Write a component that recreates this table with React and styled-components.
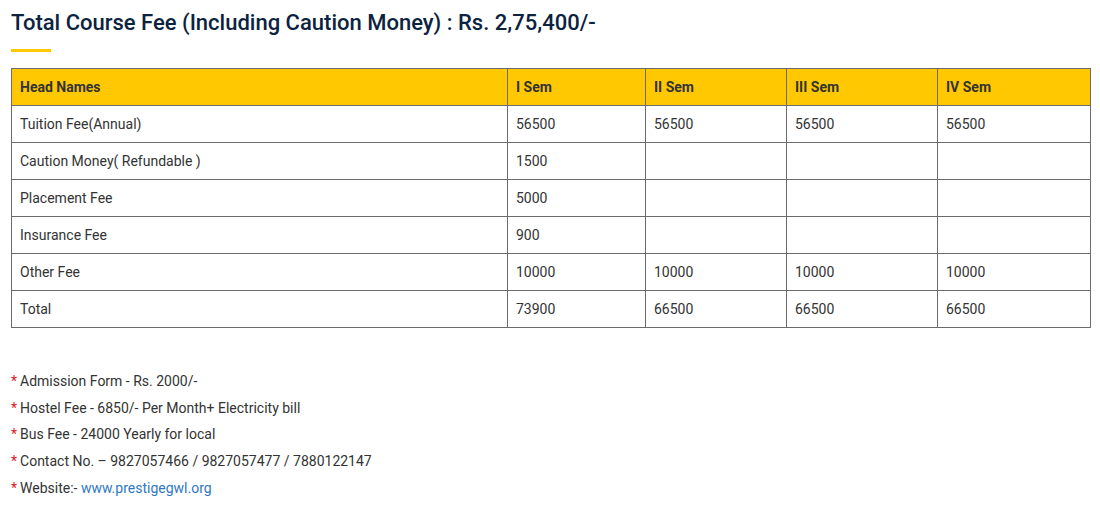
import React from "react";
import styled, { createGlobalStyle } from "styled-components";

const GlobalStyle = createGlobalStyle`
  body {
    margin: 0;
    background: #fff;
    font-family: Roboto, "Liberation Sans", sans-serif;
  }
`;

const Page = styled.div`
  padding: 8px 10px 0 11px;
`;

const Title = styled.h2`
  margin: 0;
  font-size: 22px;
  font-weight: 500;
  line-height: 30px;
  color: #0c2340;
`;

const Bar = styled.div`
  width: 40px;
  height: 3px;
  background: #ffc800;
  margin: 11px 0 16px;
`;

const Table = styled.table`
  width: 1080px;
  border-collapse: collapse;
  font-size: 14px;
  color: #333;
  table-layout: fixed;
`;

const Th = styled.th`
  box-sizing: border-box;
  background: #ffc800;
  border: 1px solid #6b6b6b;
  text-align: left;
  font-weight: 700;
  height: 37px;
  padding: 0 8px;
  width: ${props => props.w}px;
`;

const Td = styled.td`
  border: 1px solid #6b6b6b;
  height: 36px;
  padding: 0 8px;
`;

const Notes = styled.ul`
  list-style: none;
  margin: 40px 0 0;
  padding: 0;
  font-size: 14px;
  color: #333;
`;

const Note = styled.li`
  line-height: 26.7px;
  &::before {
    content: "*";
    color: #e0151b;
    margin-right: 3px;
  }
`;

const Site = styled.a`
  color: #2f78c4;
  text-decoration: none;
`;

const heads = [
  ["Head Names", 496],
  ["I Sem", 138],
  ["II Sem", 141],
  ["III Sem", 151],
  ["IV Sem", 153],
];

const rows = [
  ["Tuition Fee(Annual)", "56500", "56500", "56500", "56500"],
  ["Caution Money( Refundable )", "1500", "", "", ""],
  ["Placement Fee", "5000", "", "", ""],
  ["Insurance Fee", "900", "", "", ""],
  ["Other Fee", "10000", "10000", "10000", "10000"],
  ["Total", "73900", "66500", "66500", "66500"],
];

export default function App() {
  return (
    <Page>
      <GlobalStyle />
      <Title>Total Course Fee (Including Caution Money) : Rs. 2,75,400/-</Title>
      <Bar />
      <Table>
        <thead>
          <tr>
            {heads.map(([h, w]) => (
              <Th key={h} w={w}>{h}</Th>
            ))}
          </tr>
        </thead>
        <tbody>
          {rows.map(r => (
            <tr key={r[0]}>
              {r.map((c, i) => (
                <Td key={i}>{c}</Td>
              ))}
            </tr>
          ))}
        </tbody>
      </Table>
      <Notes>
        <Note>Admission Form - Rs. 2000/-</Note>
        <Note>Hostel Fee - 6850/- Per Month+ Electricity bill</Note>
        <Note>Bus Fee - 24000 Yearly for local</Note>
        <Note>Contact No. – 9827057466 / 9827057477 / 7880122147</Note>
        <Note>
          Website:- <Site href="#">www.prestigegwl.org</Site>
        </Note>
      </Notes>
    </Page>
  );
}
